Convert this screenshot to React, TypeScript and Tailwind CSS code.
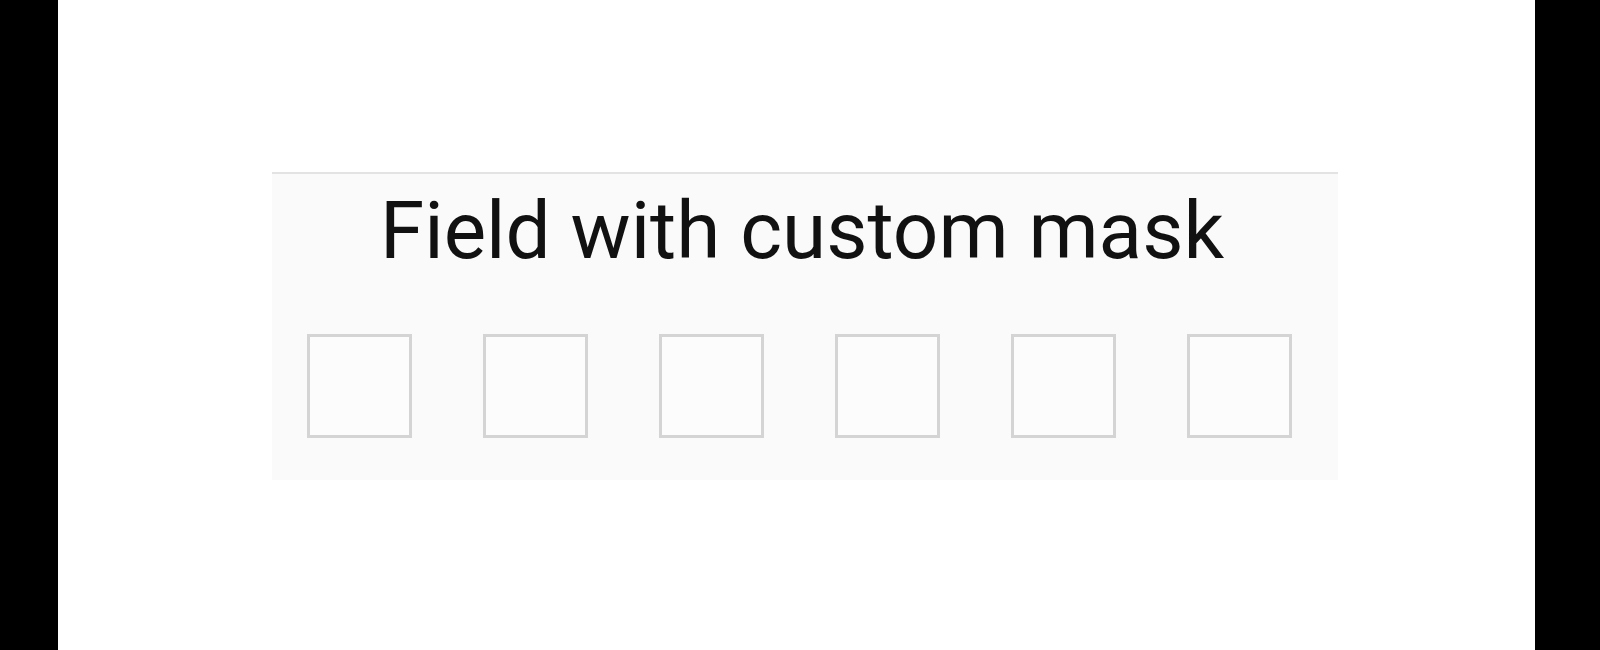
export default function App() {
  const cells = [0, 1, 2, 3, 4, 5]

  return (
    <div className="flex h-[650px] w-[1600px] overflow-hidden bg-black">
      <div className="w-[58px] shrink-0 bg-black" />
      <div className="flex-1 bg-white pl-[214px] pt-[172px]">
        {/* Mask field card */}
        <div className="h-[308px] w-[1066px] border-t-2 border-[#e3e3e3] bg-[#fafafa] pt-[17px]">
          <h1
            className="pr-[6px] text-center text-[80px] leading-none text-[#111111]"
            style={{ fontFamily: "Roboto, 'Noto Sans', sans-serif" }}
          >
            Field with custom mask
          </h1>
          <div className="mt-[63px] flex gap-[71px] pl-[35px]">
            {cells.map((i) => (
              <div key={i} className="h-[104px] w-[105px] border-[3px] border-[#d4d4d4] bg-[#fcfcfc]" />
            ))}
          </div>
        </div>
      </div>
      <div className="w-[65px] shrink-0 bg-black" />
    </div>
  )
}
